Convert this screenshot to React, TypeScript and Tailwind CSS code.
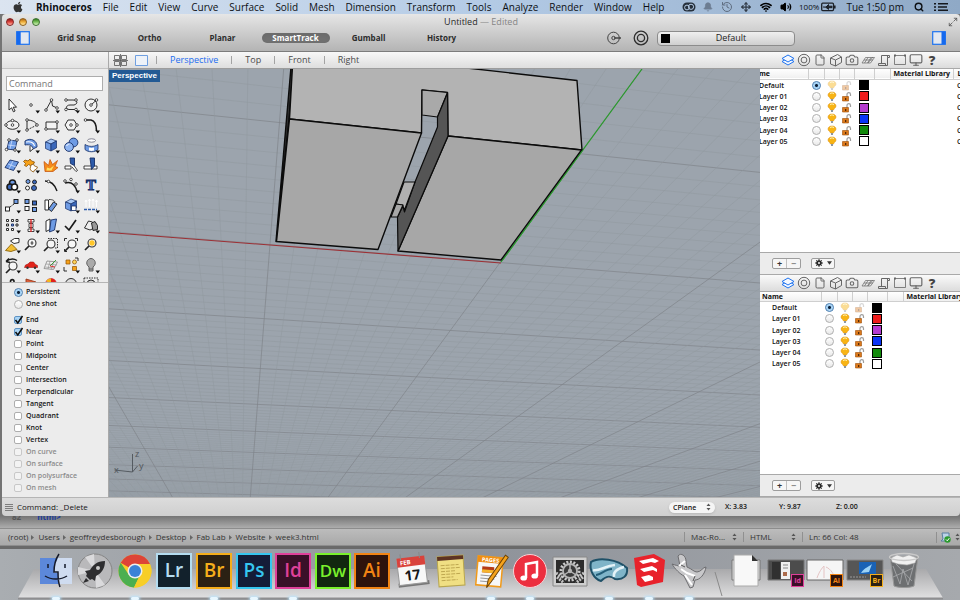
import type { ReactNode } from "react"
import { useState } from "react"
import { FaApple } from "react-icons/fa"
import { Bell, Camera, File, History, Maximize2, Monitor, Move, Search, Volume2, Wifi } from "lucide-react"

const menus = ["File", "Edit", "View", "Curve", "Surface", "Solid", "Mesh", "Dimension", "Transform", "Tools", "Analyze", "Render", "Window", "Help"]

function MenuBar() {
  return (
    <header className="flex h-3.5 shrink-0 items-center bg-gradient-to-r from-[#dbe4f0] via-[#b4cbe6] to-[#8fa9c6] px-3 text-[10px] leading-3 font-medium whitespace-nowrap text-[#0d1014]">
      <FaApple className="mr-3 h-3 w-3 shrink-0 text-[#333]" />
      <nav className="flex gap-[11px]">
        <button className="font-bold">Rhinoceros</button>
        {menus.map((m) => (
          <button key={m}>{m}</button>
        ))}
      </nav>
      <div className="ml-auto flex shrink-0 items-center">
        <div className="mr-1 flex">
          <span className="flex w-[19px] justify-center">
            <svg viewBox="0 0 14 12" className="h-3 w-3.5">
              <rect x="0.5" y="1.5" width="13" height="9" rx="4.5" fill="#26303c" />
              <circle cx="5" cy="6.5" r="2.4" fill="none" stroke="#b4cbe6" />
              <circle cx="9" cy="5.8" r="2.6" fill="none" stroke="#b4cbe6" />
            </svg>
          </span>
          <span className="flex w-[19px] justify-center"><Bell className="h-3 w-2.5 fill-[#6d7d92] text-[#6d7d92]" /></span>
          <span className="flex w-[19px] justify-center"><History className="h-3 w-3 text-[#5f6d80]" /></span>
          <span className="flex w-[19px] justify-center"><Move className="h-3 w-2.5 text-[#333c48]" strokeWidth={3} /></span>
          <span className="flex w-[21px] justify-center"><Wifi className="h-3 w-3.5 text-black" strokeWidth={3.4} /></span>
          <span className="flex w-[19px] justify-center"><Volume2 className="h-3 w-3 fill-black text-black" /></span>
        </div>
        <span className="mr-0.5 text-[8px]">100%</span>
        <svg viewBox="0 0 15 10" className="mr-2.5 h-2.5 w-[15px]">
          <rect x="0.7" y="1.2" width="11.8" height="7.4" rx="1" fill="none" stroke="#1c2128" strokeWidth="1.3" />
          <path d="M13 3.5h1.6v3H13z" fill="#1c2128" />
          <path d="M2 5h3l2.5-2.5v1.7H11v1.5H7.5v1.7L5 5.4" fill="#1c2128" stroke="#1c2128" />
        </svg>
        <span className="mr-2.5">Tue 1:50 pm</span>
        <Search className="mr-2.5 h-2.5 w-2.5" strokeWidth={3.4} />
        <svg viewBox="0 0 14 10" className="h-2.5 w-3.5" fill="#15181d">
          <path d="M0 1h2v1.6H0zM4 1h10v1.6H4zM0 4.2h2v1.6H0zM4 4.2h9v1.6H4zM0 7.4h2V9H0zM4 7.4h10V9H4z" />
        </svg>
      </div>
    </header>
  )
}

const lights = [
  "from-[#8d1d1d] via-[#e0443e] to-[#ffb3a8] border-[#842322]",
  "from-[#b36a12] via-[#f2b23c] to-[#ffe9a0] border-[#8e5f1e]",
  "from-[#2f7d1c] via-[#7cc35c] to-[#d8f5c0] border-[#3c7030]",
]

const snaps = ["Grid Snap", "Ortho", "Planar", "SmartTrack", "Gumball", "History"]

function PanelIcon({ right }: { right?: boolean }) {
  return (
    <svg viewBox="0 0 14 14" className="h-3.5 w-3.5">
      <rect x="0.7" y="0.7" width="12.6" height="12.6" fill="#e3e8f0" stroke="#1d73f0" strokeWidth="1.2" />
      <rect x={right ? 9.5 : 0.7} y="0.7" width="4" height="12.6" fill="#1569ee" />
    </svg>
  )
}

function TitleBar() {
  const [active, setActive] = useState("SmartTrack")
  return (
    <div className="shrink-0 rounded-t border-b border-[#7c7c7c] bg-gradient-to-b from-[#e6e6e6] to-[#b4b4b4]">
      <div className="flex h-4 items-center">
        <div className="flex w-24 gap-[5px] pl-1">
          {lights.map((c) => (
            <button key={c} aria-label="Window control" className={`h-2 w-2 rounded-full border bg-gradient-to-b ${c}`} />
          ))}
        </div>
        <h1 className="flex-1 text-center text-[9px] leading-3 font-medium text-[#2a2a2a]">
          Untitled <span className="text-[#858585]">— Edited</span>
        </h1>
        <div className="flex w-24 justify-end pr-0.5">
          <Maximize2 className="h-2.5 w-2.5 text-[#555]" />
        </div>
      </div>
      <div className="flex h-[21px] items-center px-3.5 pb-[5px]">
        <button aria-label="Toggle left panel" className="mr-2.5"><PanelIcon /></button>
        {snaps.map((s) => (
          <div key={s} className="flex w-[73px] justify-center">
            <button
              onClick={() => setActive(s)}
              className={`rounded-full text-[8px] leading-[10px] font-bold ${active === s ? "w-[68px] bg-[#707070] text-white shadow-inner" : "text-[#2c2c2c]"}`}
            >
              {s}
            </button>
          </div>
        ))}
        <div className="ml-auto flex items-center">
          <svg viewBox="0 0 14 14" className="mr-3 h-3.5 w-3.5" fill="none" stroke="#444">
            <circle cx="6.5" cy="7" r="5.8" />
            <circle cx="6.5" cy="7" r="1.7" />
            <path d="M7 7h7" strokeWidth="1.5" />
          </svg>
          <svg viewBox="0 0 16 16" className="mr-2 h-4 w-4" fill="none" stroke="#2e2e2e" strokeWidth="1.3">
            <circle cx="8" cy="8" r="6.8" />
            <circle cx="8" cy="8" r="3.6" />
          </svg>
          <div className="relative mr-[137px] flex items-center">
            <select aria-label="Layer" className="h-[15px] w-[138px] appearance-none rounded-sm border border-[#8c8c8c] bg-gradient-to-b from-[#f0f0f0] to-[#cfcfcf] pl-2.5 text-center text-[9px] leading-3 font-medium text-[#222]">
              <option>Default</option>
            </select>
            <span className="pointer-events-none absolute left-1 h-[9px] w-[9px] bg-black" />
          </div>
          <button aria-label="Toggle right panel"><PanelIcon right /></button>
        </div>
      </div>
    </div>
  )
}

const Flyout = () => <path d="M14.500 15.500h4.500l-2.250 3z" fill="#111" stroke="none" />
const Dot = ({ x, y }: { x: number; y: number }) => <circle cx={x} cy={y} r="1.3" fill="#fff" stroke="#222" strokeWidth="0.8" />
const Glass = ({ x = 11, y = 8 }: { x?: number; y?: number }) => (
  <g>
    <circle cx={x} cy={y} r="4" fill="#f6f6f6" stroke="#333" strokeWidth="1.1" />
    <path d={`M${x - 3} ${y + 3}l-4 4`} stroke="#222" strokeWidth="1.7" />
  </g>
)
const Cube = () => (
  <g stroke="#172f66" strokeWidth="0.7" strokeLinejoin="round">
    <path d="M4.500 7l5.500-3 5.500 2-5.500 3z" fill="#a9c8f5" />
    <path d="M4.500 7l5.500 2v7l-5.500-2.500z" fill="#6e9be4" />
    <path d="M10 9l5.500-3v7L10 16z" fill="#3b68bb" />
  </g>
)
const SmallBox = ({ x, y, fill }: { x: number; y: number; fill: string }) => <rect x={x} y={y} width="4" height="4" fill={fill} stroke="#111" />

const tools: [string, ReactNode][] = [
  ["Select", <path d="M7 4v11l2.600-2.200 1.800 4 1.700-.8-1.900-3.800h3.300z" fill="#fff" />],
  ["Point", <><Dot x={10} y={10} /><Flyout /></>],
  ["Polyline", <><path d="M5 15l5.500-10 1 6 5 2" /><Dot x={5} y={15} /><Dot x={10.5} y={5} /><Dot x={16} y={13} /><Flyout /></>],
  ["Curve", <><path d="M5 5h7c5 0 5 4 1 5H9c-4 0-5 4-1 4.500h7" /><Dot x={5} y={5} /><Dot x={15} y={5} /><Dot x={5} y={14.5} /><Dot x={15} y={14.5} /><Flyout /></>],
  ["Circle", <><circle cx="10" cy="10" r="6" fill="#f3f3f3" /><path d="M10 10l5-4.500" /><Dot x={10} y={10} /><Dot x={15.5} y={5} /><Flyout /></>],
  ["Ellipse", <><ellipse cx="10.500" cy="10" rx="6.500" ry="4.300" fill="#f3f3f3" /><Dot x={10.5} y={10} /><Dot x={4} y={10} /><Dot x={10.5} y={5.5} /><Flyout /></>],
  ["Arc", <><path d="M6 15L16 10" strokeDasharray="2 1" /><path d="M6 5v10M6 5c5 0 9 2 10 5" /><Dot x={6} y={5} /><Dot x={6} y={15} /><Dot x={16} y={10} /><Flyout /></>],
  ["Rectangle", <><path d="M5 7h11v7H5z" fill="#f3f3f3" /><Dot x={5} y={14} /><Dot x={16} y={7} /><Flyout /></>],
  ["Polygon", <><path d="M4 10l3-5h6l3 5-3 5H7z" fill="#f3f3f3" /><Dot x={10} y={10} /><Dot x={16} y={10} /><Flyout /></>],
  ["Fillet", <><path d="M4 5h6c4 1 5.500 5 5.500 11" strokeWidth="1.600" /><Dot x={4.5} y={5} /><Flyout /></>],
  ["Surface", <><path d="M7 5l8 1-2 9-8-1z" fill="#6e9be4" stroke="#172f66" /><path d="M10 5l-2 9M6 10l8 1" stroke="#dbe8ff" strokeWidth="0.700" /><Dot x={7} y={5} /><Dot x={15} y={5} /><Dot x={4.5} y={14.5} /><Dot x={13} y={15} /><Flyout /></>],
  ["Sweep", <><path d="M4 6c3-2 6-2 8-1 4 2 4 5 4 7l-4 2c0-3-3-5-8-4z" fill="#6e9be4" stroke="#172f66" /><path d="M5 7c5-1 8 1 8.500 4" stroke="#fff" strokeWidth="1.200" /><path d="M9 11v5.500l3-2.500" fill="#fff" /><Flyout /></>],
  ["Box", <><Cube /><Flyout /></>],
  ["Boolean", <><circle cx="12.500" cy="7.500" r="4.400" fill="#6e9be4" stroke="#172f66" /><circle cx="8" cy="12" r="4.400" fill="#8fb5f2" stroke="#172f66" /><path d="M5.500 11c1-2 3-2 3-2" stroke="#fff" /><Flyout /></>],
  ["Revolve", <><ellipse cx="10.500" cy="5.500" rx="4" ry="1.700" fill="#fff" stroke="#667" strokeWidth="0.800" /><path d="M4 9.500v5c3 3 10 3 13 0v-5c-4 2.500-9 2.500-13 0z" fill="#6e9be4" stroke="#172f66" strokeWidth="0.800" /><path d="M8 12.500c2 .5 3 .5 5 0v3c-2 .5-3 .5-5 0z" fill="#fff" stroke="none" /><Flyout /></>],
  ["Patch", <><path d="M8 5l8.500 2-5 8.500-8.500-3z" fill="#6e9be4" stroke="#172f66" /><path d="M11 6l-4 8M6 9l8 3" stroke="#dbe8ff" strokeWidth="0.700" /><Flyout /></>],
  ["Plug-ins", <><path d="M4 5l3 1 2-2 1.500 2 3 1-1 2-3 1.500-2-1-2 2-2-1 1-2-2-2z" fill="#f6a11a" stroke="#8c5204" strokeWidth="0.800" /><path d="M10 10l2.500-1 1 2 3 1-1 2-2 1-1 2-2-1-1.500-2z" fill="#fff" stroke="#8c5204" strokeWidth="0.800" /><Flyout /></>],
  ["Explode", <><path d="M4 16.500l-1-10 4.500 4 1.500-6 2.500 5 5-4-2.500 6 3 1-5 4z" fill="#f58a1b" stroke="#c34d05" strokeWidth="0.700" /><path d="M5.500 15.500l.5-3 3 1 4-3-2.500 5z" fill="#ffe060" stroke="none" /></>],
  ["Trim", <><path d="M4 11h6v3H4zM11 12l4 4.500 1.500-1-3.500-5" fill="#fff" strokeWidth="0.800" /><path d="M9 3h4.500v7.500l-4-2z" fill="#2d5baa" stroke="#172f66" /></>],
  ["Split", <><path d="M3 11h13v3H3z" fill="#fff" strokeWidth="0.800" /><path d="M9 3h4.500v8l-3 3.500z" fill="#2d5baa" stroke="#172f66" /></>],
  ["Group", <><circle cx="10.500" cy="8" r="3" fill="#6e9be4" strokeWidth="1.600" /><circle cx="8" cy="12" r="3" fill="#3b68bb" strokeWidth="1.600" /><circle cx="12.500" cy="12" r="3" fill="#fff" strokeWidth="1.600" /><Flyout /></>],
  ["Ungroup", <><circle cx="7" cy="6.500" r="2" fill="#6e9be4" /><circle cx="13.500" cy="7" r="2" fill="#3b68bb" /><circle cx="6.500" cy="13" r="2" fill="#fff" /><circle cx="13" cy="13" r="2.500" fill="#3b68bb" /></>],
  ["Edit curve", <><path d="M4 6c6 0 10 4 12 10" strokeWidth="1.400" /><Dot x={7.5} y={6.5} /></>],
  ["Edit points", <><path d="M4 8c6-2 10 2 12 8" strokeWidth="1.400" /><Dot x={4} y={6} /><Dot x={10} y={4.5} /><Dot x={15} y={9} /><Flyout /></>],
  ["Text", <><text x="10" y="15" textAnchor="middle" fontSize="15" fontWeight="900" fontFamily="Liberation Serif, serif" fill="#4a7dd6" stroke="#172f66" strokeWidth="1">T</text><Flyout /></>],
  ["Move", <><SmallBox x={3.5} y={12} fill="#fff" /><SmallBox x={12} y={4.5} fill="#6e9be4" /><path d="M8 12l4-3" strokeDasharray="2 1" /><Flyout /></>],
  ["Copy", <><SmallBox x={4} y={4.5} fill="#6e9be4" /><SmallBox x={11.5} y={6} fill="#3b68bb" /><SmallBox x={4} y={11.5} fill="#fff" /><SmallBox x={11.5} y={12.5} fill="#6e9be4" /></>],
  ["Rotate", <><path d="M4 5h3.500v10H4z" fill="#fff" /><path d="M12.500 7l3.500 2-5.500 7.500-3-2.500z" fill="#6e9be4" /><path d="M8 4.500c4 0 5 1 6 2.500" strokeWidth="0.800" /></>],
  ["Solid edit", <><Cube /><path d="M10.500 11h4.500v4.500h-4.500z" fill="#fff" stroke="#172f66" strokeWidth="0.800" /><Flyout /></>],
  ["Project", <><path d="M3 14.500h13" stroke="#2d5baa" strokeWidth="1.600" strokeDasharray="3 1" /><path d="M5 5v7M8.500 4v8M12 4v8M15.500 5v7M4 7l1-2 1 2M7.500 6l1-2 1 2M11 6l1-2 1 2M14.500 7l1-2 1 2" stroke="#fff" /><Flyout /></>],
  ["Array", <><path d="M4.500 4.500h2v2h-2zM9.500 4.500h2v2h-2zM14 4.500h2v2h-2zM4.500 9h2v2h-2zM14 9h2v2h-2zM4.500 13.500h2v2h-2zM9.500 13.500h2v2h-2z" fill="#fff" /><path d="M9.500 9h2v2h-2z" fill="#6e9be4" stroke="#172f66" /><Flyout /></>],
  ["Align", <><path d="M7 4.500h6v2.500H7zM8 8.500h4v4H8zM7 14h6v2.500H7z" fill="#fff" strokeWidth="0.800" /><path d="M10 4v13" stroke="#d22" strokeWidth="1.300" /><Flyout /></>],
  ["Flow", <><path d="M5 6l4-2v10.500l-4 2z" fill="#fff" /><path d="M10 5l5.500-1-2 11-5 2z" fill="#6e9be4" stroke="#172f66" /><Flyout /></>],
  ["Check", <><path d="M4 11l4 4 7-10" strokeWidth="1.700" /><Flyout /></>],
  ["Primitives", <><path d="M3.500 13l4-7 4 1 2 6-4.500 2z" fill="#eee" /><path d="M10.500 8l3.500-1.500 2.500 4v4l-4.500 1z" fill="#999" /><Flyout /></>],
  ["Plane", <><path d="M3.500 15.500l6-6.500 5.500 5.500-6 2z" fill="#f0bd33" stroke="#8c6204" /><path d="M8.500 6l4-2.500h4.500v4l-5 1z" fill="#fff" strokeWidth="0.900" /><Flyout /></>],
  ["Zoom", <><Glass /><path d="M11 6v4M9.500 8h3" strokeWidth="0.800" /></>],
  ["Zoom window", <><path d="M7 3.500h9.500v9.500h-3" strokeDasharray="1.500 1" /><Glass x={10} y={9} /><Flyout /></>],
  ["Zoom extents", <><Glass x={11} y={9} /><path d="M3.500 6V3.500H6M14 3.500h2.500V6M16.500 14v2.500H14M3.500 14v2.500H6" /></>],
  ["Zoom selected", <><Glass x={11} y={8} /><circle cx="11" cy="8" r="2.700" fill="#ffc629" stroke="none" /></>],
  ["Undo view", <><Glass x={11} y={11} /><path d="M4 6.500c4-3 8-3 11-1M4 6.500l3-3M4 6.500l4 1" strokeWidth="1.500" /><Flyout /></>],
  ["Car", <><path d="M3.500 12.500l1-2.500 2.500-1 2-2h3.500l2 2.500 2 1v2z" fill="#e2231a" stroke="#a41510" strokeWidth="0.600" /><circle cx="6.500" cy="12.700" r="1.200" fill="#333" stroke="none" /><circle cx="14" cy="12.700" r="1.200" fill="#333" stroke="none" /><Flyout /></>],
  ["CPlane", <><path d="M6 6l10.500 1-4 7.500-9.500-1z" fill="#eee" stroke="#888" strokeWidth="0.800" /><path d="M9 6l-2 8M13 6.500l-3 8M5 9l11 1M4 12l10 1" stroke="#888" strokeWidth="0.600" /><path d="M9 11l6-6" stroke="#2a9c2a" /><path d="M9 11l5 1" stroke="#d22" /><Flyout /></>],
  ["Layers", <><path d="M5 5h4v4H5z" fill="#f6a11a" stroke="#8c5204" strokeWidth="0.700" /><path d="M11.500 11.500h4v4h-4z" fill="#f6a11a" stroke="#8c5204" strokeWidth="0.700" /><circle cx="13.500" cy="7" r="2" fill="#ffd65c" stroke="#8c5204" strokeWidth="0.700" /><path d="M3 12v4h3M14 3h3v3" /><Flyout /></>],
  ["Lights", <><path d="M8 12c-4.500-3.500-1.500-8.500 2-8.500s6.500 5 2 8.500v4H8z" fill="#aaa" stroke="#555" /><path d="M8 14h4" stroke="#555" /><Flyout /></>],
  ["Lock", <path d="M8.500 8V6.500c0-2.500 3.500-2.500 3.500 0V8M7.500 8h5.500v5H7.500z" strokeWidth="1.600" />],
  ["Render", <path d="M5 4l10 3v7H5z" fill="#d95f3b" stroke="#9a3818" />],
  ["Colors", <><circle cx="10" cy="9" r="5.500" fill="#e83ca0" stroke="#b33" strokeWidth="0.600" /><path d="M10 9L5 6a5.500 5.500 0 0 1 5-2.500z" fill="#f5b81c" stroke="none" /><path d="M10 9V3.500a5.500 5.500 0 0 1 5 3z" fill="#e2231a" stroke="none" /></>],
  ["Sphere", <circle cx="10" cy="9" r="5.500" fill="#ddd" />],
  ["Mesh", <><path d="M3 3h14v8H3z" strokeDasharray="1.500 1" /><circle cx="10" cy="9" r="4" fill="#ccc" /></>],
]

const snapModes: [string, boolean, boolean][] = [
  ["End", true, false], ["Near", true, false], ["Point", false, false], ["Midpoint", false, false],
  ["Center", false, false], ["Intersection", false, false], ["Perpendicular", false, false],
  ["Tangent", false, false], ["Quadrant", false, false], ["Knot", false, false], ["Vertex", false, false],
  ["On curve", false, true], ["On surface", false, true], ["On polysurface", false, true], ["On mesh", false, true],
]

const radioClass =
  "h-[9px] w-[9px] shrink-0 appearance-none rounded-full border border-[#b0b0b0] bg-gradient-to-b from-white to-[#e8e8e8] checked:border-[#4d7fb0] checked:bg-[radial-gradient(circle,#0d2038_0_1px,#9ccdf3_2px,#c9e6fb_4px)]"

function Sidebar() {
  return (
    <aside className="flex w-[107px] shrink-0 flex-col border-r border-[#a9a9a9] bg-[#ececec]">
      <div className="h-[17px] shrink-0 border-b border-[#c4c4c4] bg-gradient-to-b from-[#f4f4f4] to-[#e2e2e2]" />
      <input
        aria-label="Command"
        placeholder="Command"
        className="mx-1 mt-[7px] mb-1 h-[15px] w-[97px] shrink-0 border border-[#adadad] bg-white pl-0.5 text-[9px] leading-3 placeholder:text-[#777]"
      />
      <div className="grid h-[188px] shrink-0 grid-cols-[19px_repeat(4,20px)] content-start overflow-hidden border-b border-[#b5b5b5]">
        {tools.map(([name, art]) => (
          <button key={name} aria-label={name} className="flex h-5 justify-center">
            <svg viewBox="0 0 20 20" className="h-5 w-5 shrink-0" fill="none" stroke="#1a1a1a" strokeWidth="0.9">
              {art}
            </svg>
          </button>
        ))}
      </div>
      <div className="min-h-0 flex-1 overflow-hidden pt-[3px] pl-3 text-[7px] leading-3 font-semibold text-[#161616]">
        {["Persistent", "One shot"].map((r, i) => (
          <label key={r} className="flex h-3 items-center gap-[3px]">
            <input type="radio" name="snap" defaultChecked={i === 0} className={radioClass} />
            {r}
          </label>
        ))}
        <div className="h-1" />
        {snapModes.map(([label, on, disabled]) => (
          <label key={label} className={`flex h-3 items-center gap-[3px] ${disabled ? "text-[#8b8b8b]" : ""}`}>
            <span className="relative flex h-2 w-[9px]">
              <input
                type="checkbox"
                defaultChecked={on}
                disabled={disabled}
                className="peer h-2 w-2 appearance-none rounded-[2px] border border-[#adadad] bg-white checked:border-[#5f93c4] checked:bg-[#a9d4f5] disabled:border-[#c8c8c8] disabled:bg-[#f3f3f3]"
              />
              <svg viewBox="0 0 10 10" className="pointer-events-none absolute -top-px left-0 hidden h-2.5 w-2.5 peer-checked:block">
                <path d="M1.500 5l2.300 3L8.500 1" fill="none" stroke="#0b0b0b" strokeWidth="1.500" />
              </svg>
            </span>
            {label}
          </label>
        ))}
      </div>
    </aside>
  )
}

// Vanishing points of the construction plane grid
const vpY = { x: 241, y: 616 }
const vpX = { x: 5149, y: 628 }

function GridLines() {
  const across = Array.from({ length: 330 }, (_, i) => i - 12).map((i) => ({ i, y: 623 - 1596 / (i / 10 + 3.08) }))
  const along = Array.from({ length: 100 }, (_, i) => i - 65).map((i) => ({ i, s: -0.733 + i * 0.0655 }))
  const tone = (i: number) => (i % 10 === 0 ? "#7f848a" : "#91989f")
  return (
    <g>
      {across
        .filter(({ y }) => y < 510)
        .map(({ i, y }) => (
          <line key={`a${i}`} x1="109" y1={y} x2={vpX.x} y2={vpX.y} stroke={tone(i)} strokeWidth={i % 10 === 0 ? 0.7 : 0.5} />
        ))}
      {along.map(({ i, s }) => (
        <line key={`b${i}`} x1={vpY.x - s * vpY.y} y1="0" x2={vpY.x} y2={vpY.y} stroke={tone(i)} strokeWidth={i % 10 === 0 ? 0.7 : 0.5} />
      ))}
    </g>
  )
}

function Viewport() {
  return (
    <div className="relative min-h-0 flex-1 bg-[#9ca4ad]">
      <svg viewBox="109 69 651 428" preserveAspectRatio="xMidYMid slice" className="absolute inset-0 h-full w-full">
        <GridLines />
        <path d="M109 232.500L501 263" stroke="#9d3035" strokeWidth="1.100" />
        <path d="M501 262L642 69" stroke="#2a9a2c" strokeWidth="1.200" />
        <g stroke="#0b0b0b" strokeWidth="1.400" strokeLinejoin="round">
          <path d="M291 67L276 241.500 289 119 293 67z" fill="#333" />
          <path d="M292.500 66L289.500 119 421.500 133 422 90 447.500 92.500 448 136 582 150 577 80.500 440 65z" fill="#b3b3b3" />
          <path d="M289.500 119L421.500 133 378 249.500 276.500 241.500z" fill="#a7a7a7" />
          <path d="M448 136L581.500 150 501 260 398 251z" fill="#a7a7a7" />
          <path d="M422 90L447.500 92.500 437.500 117 422 115z" fill="#a9a9a9" strokeWidth="1.200" />
          <path d="M447.500 93L448 136 398 251 397.500 217 403 206 404.500 212 415 182 437.500 127 437.500 117z" fill="#555" strokeWidth="1.200" />
          <path d="M404 182L415 182 404.500 210 402.500 205 396 204z" fill="#b0b0b0" strokeWidth="1.200" />
          <path d="M396 204L403 205 397.500 217 391 217z" fill="#a7a7a7" strokeWidth="1.200" />
        </g>
        <path d="M502.500 260.500L583 150" stroke="#2a9a2c" strokeWidth="0.800" />
        <path d="M132.500 454v18l-18-2M132.500 472l5-6" stroke="#555b61" fill="none" />
        <g fill="#4f555b" fontSize="9" fontFamily="Open Sans, sans-serif">
          <text x="135" y="457">z</text>
          <text x="139" y="469">y</text>
          <text x="114" y="473">x</text>
        </g>
      </svg>
      <span className="absolute top-px left-0 bg-[#235a94] px-[3px] font-['Liberation_Sans',sans-serif] text-[8px] leading-3 font-bold text-white">Perspective</span>
    </div>
  )
}

function ViewTabs() {
  return (
    <div className="flex h-[17px] shrink-0 items-center border-b border-[#9d9d9d] bg-gradient-to-b from-[#f8f8f8] to-[#dedede] pl-1 text-[9px] leading-3 font-medium text-[#4a4a4a]">
      <button aria-label="Four views" className="mr-1.5">
        <svg viewBox="0 0 15 13" className="h-[13px] w-[15px]" fill="none" stroke="#555">
          <path d="M1.500 1.500h5v4h-5zM8.500 1.500h5v4h-5zM1.500 7.500h5v4h-5zM8.500 7.500h5v4h-5zM0 6.500h15M7.500 0v13" strokeWidth="0.800" />
        </svg>
      </button>
      <button aria-label="Single view" className="mr-[7px]">
        <svg viewBox="0 0 15 13" className="h-[13px] w-[15px]" fill="#edf2f9" stroke="#6f9fe0">
          <path d="M1.500 1.500h12v10h-12z" />
        </svg>
      </button>
      {["Perspective", "Top", "Front", "Right"].map((v, i) => (
        <div key={v} className="flex items-center">
          <span className="h-2 w-px bg-[#a3a3a3]" />
          <button className={i === 0 ? "px-[13px] text-[#1b6cf0]" : "px-[13px]"}>{v}</button>
        </div>
      ))}
    </div>
  )
}

function PanelTabs() {
  const cell = "flex h-4 w-4 items-center justify-center"
  return (
    <div className="flex h-[17px] shrink-0 items-center border-b border-[#a9a9a9] bg-gradient-to-b from-[#fafafa] to-[#dcdcdc] pl-5 text-[#666]">
      <button aria-label="Layers" className={cell}>
        <svg viewBox="0 0 14 14" className="h-3.5 w-3.5" fill="#f4f8ff" stroke="#1d73f0">
          <path d="M1 8.500l6-3.500 6 3.500-6 3.500z" />
          <path d="M1 5.500L7 2l6 3.500L7 9z" />
        </svg>
      </button>
      <button aria-label="Properties" className={cell}>
        <svg viewBox="0 0 14 14" className="h-3.5 w-3.5" fill="none" stroke="currentColor">
          <circle cx="7" cy="7" r="5.700" />
          <circle cx="7" cy="7" r="2.900" />
        </svg>
      </button>
      <button aria-label="Notes" className={cell}><File className="h-3 w-3" strokeWidth={2} /></button>
      <button aria-label="Blocks" className={cell}>
        <svg viewBox="0 0 14 14" className="h-3.5 w-3.5" fill="none" stroke="currentColor">
          <path d="M1.500 5l7-3.500 4 2.500v5.500l-6 3.500-5-2zM1.500 5l5 2 6-3M6.500 7v6" />
        </svg>
      </button>
      <button aria-label="Views" className={cell}><Camera className="h-3.5 w-3.5" strokeWidth={1.8} /></button>
      <button aria-label="Planes" className={cell}>
        <svg viewBox="0 0 14 14" className="h-3.5 w-3.5" fill="none" stroke="currentColor" strokeWidth="0.7">
          <path d="M4.500 4.500h9l-4 5.500H1zM7 4.500L3.500 10M10 4.500L6.500 10M3 7h9M7 10l5-6" />
        </svg>
      </button>
      <button aria-label="Commands" className={cell}>
        <svg viewBox="0 0 14 14" className="h-3.5 w-3.5" fill="none" stroke="currentColor">
          <path d="M4.500 10.500v-8h8v2h-2v8h-9v-2h7v2M10.500 4.500v-2" />
        </svg>
      </button>
      <button aria-label="Frame" className={cell}>
        <svg viewBox="0 0 14 14" className="h-3.5 w-3.5" fill="none" stroke="currentColor">
          <path d="M1.500 2.500h11v9h-11z" strokeWidth="0.800" />
          <path d="M1 2.500h2M11 2.500h2" strokeWidth="2" />
        </svg>
      </button>
      <button aria-label="Display" className={cell}><Monitor className="h-3.5 w-3.5" strokeWidth={2} /></button>
      <button aria-label="Help" className={`${cell} text-[13px] leading-4 font-extrabold text-[#444]`}>?</button>
    </div>
  )
}

const layers = [
  ["Default", "bg-black"],
  ["Layer 01", "bg-[#ee1c1c]"],
  ["Layer 02", "bg-[#b43bd0]"],
  ["Layer 03", "bg-[#0a34f5]"],
  ["Layer 04", "bg-[#128a0b]"],
  ["Layer 05", "bg-white"],
]

function LayerPanel({ id, scrolled }: { id: string; scrolled?: boolean }) {
  const head = "border-r border-[#cfcfcf] p-0"
  return (
    <section className="flex min-h-0 flex-1 flex-col">
      <PanelTabs />
      <div className="min-h-0 flex-1 overflow-hidden bg-white">
        <table className={`h-[78px] w-[260px] table-fixed border-collapse text-left text-[7px] leading-[9px] font-semibold text-[#111] ${scrolled ? "-ml-[13px]" : ""}`}>
          <colgroup>
            <col className="w-[61px]" />
            <col className="w-[16px]" />
            <col className="w-[15px]" />
            <col className="w-[15px]" />
            <col className="w-[20px]" />
            <col className="w-[16px]" />
            <col className="w-[63px]" />
            <col />
          </colgroup>
          <thead>
            <tr className="h-[10px] border-b border-[#cfcfcf] bg-gradient-to-b from-white to-[#f0f0f0]">
              <th className={`${head} pl-0.5`}>Name</th>
              <th className={head} /><th className={head} /><th className={head} /><th className={head} /><th className={head} />
              <th className={`${head} pl-[3px] whitespace-nowrap`}>Material Library</th>
              <th className="p-0 pl-1">Linetype</th>
            </tr>
          </thead>
          <tbody>
            {layers.map(([name, color], i) => (
              <tr key={name}>
                <td className="p-0 pl-3">{name}</td>
                <td className="p-0">
                  <input type="radio" name={id} aria-label={`Current layer ${name}`} defaultChecked={i === 0} className={`mx-auto block ${radioClass}`} />
                </td>
                <td className="p-0">
                  <svg viewBox="0 0 10 11" className={`mx-auto h-[11px] w-2.5 ${i === 0 ? "opacity-45" : ""}`}>
                    <path d="M1 4c0-4 8-4 8 0 0 2-2 2-2.500 4h-3C3 6 1 6 1 4z" fill="#f8b414" stroke="#d98a10" strokeWidth="0.500" />
                    <path d="M3 3c1-1.500 3-1.500 4 0" fill="none" stroke="#fff3b0" />
                    <path d="M4 8h2v2H4z" fill="#8d96a0" />
                  </svg>
                </td>
                <td className="p-0">
                  <svg viewBox="0 0 11 11" className={`mx-auto h-[11px] w-[11px] ${i === 0 ? "opacity-40" : ""}`}>
                    <path d="M6 6V3.500c0-2.500 3.500-2.500 3.500 0V5" fill="none" stroke="#9d9d9d" strokeWidth="1.200" />
                    <path d="M1.500 5.500h6V10h-6z" fill="#dc7a1c" stroke="#9c4e08" strokeWidth="0.600" />
                    <path d="M4 7h1.300v2H4z" fill="#53290a" />
                  </svg>
                </td>
                <td className="p-0">
                  <button aria-label={`${name} color`} className={`mx-auto block h-2.5 w-2.5 border border-black ${color}`} />
                </td>
                <td className="p-0" />
                <td className="p-0" />
                <td className="p-0 pl-1">Continuous</td>
              </tr>
            ))}
          </tbody>
        </table>
      </div>
      <div className="flex h-[23px] shrink-0 items-center gap-2.5 border-y border-[#a9a9a9] bg-[#ececec] pl-3">
        <div className="flex h-[11px] w-[29px] rounded-xs border border-[#9d9d9d] bg-[#f6f6f6] text-[9px] leading-[9px] font-bold text-[#333]">
          <button aria-label="Add layer" className="flex-1 border-r border-[#c0c0c0]">+</button>
          <button aria-label="Remove layer" className="flex-1 text-[#888]">−</button>
        </div>
        <button aria-label="Layer actions" className="flex h-[11px] w-6 items-center justify-center gap-1 rounded-xs border border-[#9d9d9d] bg-[#f6f6f6]">
          <svg viewBox="0 0 8 8" className="h-2 w-2" fill="none" stroke="#222">
            <circle cx="4" cy="4" r="2" strokeWidth="1.600" />
            <path d="M4 0v8M0 4h8M1.200 1.200l5.600 5.600M6.800 1.200L1.200 6.800" strokeWidth="0.900" />
            <circle cx="4" cy="4" r="1" fill="#f6f6f6" stroke="none" />
          </svg>
          <svg viewBox="0 0 6 4" className="h-1 w-[5px]"><path d="M0 0h6L3 4z" fill="#333" /></svg>
        </button>
      </div>
    </section>
  )
}

const UpDown = () => (
  <svg viewBox="0 0 5 8" className="h-2 w-[5px]" fill="#555">
    <path d="M2.500 0.500L4.500 3h-4zM2.500 7.500L4.500 5h-4z" />
  </svg>
)

function StatusBar() {
  return (
    <footer className="flex h-[19px] shrink-0 items-center rounded-b border-t border-[#b5b5b5] bg-gradient-to-b from-[#dcdcdc] to-[#cfcfcf] pl-[3px] text-[7px] leading-3 font-semibold text-[#161616]">
      <svg viewBox="0 0 8 8" className="mr-1 h-2 w-2" stroke="#666">
        <path d="M0 1.500h8M0 3.500h8M0 5.500h8M0 7.500h8" strokeWidth="0.800" />
      </svg>
      <span className="text-[8px] font-medium">Command: _Delete</span>
      <div className="relative ml-auto flex items-center">
        <select aria-label="Coordinate system" className="h-[11px] w-[46px] appearance-none rounded-full bg-[#f5f5f5] pl-1 text-[7px] leading-[11px] font-semibold shadow-sm">
          <option>CPlane</option>
        </select>
        <span className="pointer-events-none absolute right-1"><UpDown /></span>
      </div>
      <div className="ml-2.5 flex w-[235px]">
        <span className="w-[54px]">X: 3.83</span>
        <span className="w-[57px]">Y: 9.87</span>
        <span>Z: 0.00</span>
      </div>
    </footer>
  )
}

const crumbs = ["(root)", "Users", "geoffreydesborough", "Desktop", "Fab Lab", "Website", "week3.html"]

function EditorWindow() {
  return (
    <div className="flex h-[33px] shrink-0 flex-col border-b-[3px] border-[#6a6a6a]">
      <div className="flex h-3 shrink-0 gap-4 overflow-hidden bg-gradient-to-b from-[#747474] to-[#adadad] pl-3 text-[8px] leading-[1px] font-bold">
        <span className="text-[#555]">82</span>
        <span className="text-[#1a3c9c]">html&gt;</span>
      </div>
      <div className="flex flex-1 items-center border-y border-[#8d8d8d] bg-gradient-to-b from-[#bcbcbc] to-[#a9a9a9] pl-2 text-[8px] leading-3 font-medium text-[#333]">
        <nav className="flex items-center gap-[3px]">
          {crumbs.map((c, i) => (
            <span key={c} className="flex items-center gap-1">
              {i > 0 && <svg viewBox="0 0 3 5" className="h-[5px] w-[3px]"><path d="M0 0l3 2.500L0 5z" fill="#666" /></svg>}
              <a href="#">{c}</a>
            </span>
          ))}
        </nav>
        <div className="ml-auto flex items-center">
          <button className="flex w-[59px] items-center justify-between border-l border-[#909090] px-1.5 leading-[10px]">Mac-Ro... <UpDown /></button>
          <button className="flex w-[59px] items-center justify-between border-l border-[#909090] px-1.5 leading-[10px]">HTML <UpDown /></button>
          <span className="w-[134px] border-l border-[#909090] pl-1.5 leading-[10px]">Ln: 66 Col: 48</span>
          <button aria-label="Validate" className="flex w-6 items-center gap-1 border-l border-[#909090] pl-[3px]">
            <svg viewBox="0 0 11 11" className="h-[11px] w-[11px]">
              <path d="M2 1h7v8H1l2-2z" fill="#bcd3e8" stroke="#5a7f9f" />
              <circle cx="7.500" cy="7.500" r="3.200" fill="#2b9b2f" />
              <path d="M6 7.500l1.300 1.300 2-2.600" fill="none" stroke="#fff" />
            </svg>
            <UpDown />
          </button>
        </div>
      </div>
    </div>
  )
}

function AdobeIcon({ label, color, bg, small }: { label: string; color: string; bg: string; small?: boolean }) {
  const size = label === "Dw" ? 17 : 19
  return (
    <g>
      <rect x={small ? 23.5 : 1} y={small ? 21.5 : 1} width={small ? 12 : 34} height={small ? 12 : 34} fill={bg} stroke={color} strokeWidth={small ? 1 : 2} />
      <text x={small ? 29.5 : 18} y={small ? 30 : 24} textAnchor="middle" fontSize={small ? 7 : size} fontWeight={small ? 700 : 600} fontFamily="Open Sans, sans-serif" fill={color}>
        {label}
      </text>
    </g>
  )
}

const dockApps: [string, ReactNode, boolean][] = [
  ["Finder", <><path d="M2 5h32v26H2z" fill="#8fb0e8" /><path d="M2 5h17c-3 7-3 10-3 15h4c0 4 0 7 1 11H2z" fill="#5c88da" /><path d="M20 5h14v26H21c-1-4-1-7-1-11h-4c0-5 0-8 4-15z" fill="#cfdcf0" /><path d="M21 1c-4 6-5 12-5 18h4c0 6 0 10 2 15M7 23c6 4 16 4 22 0M10 11v4M27 11v4" fill="none" stroke="#151a2a" strokeWidth="1.500" /></>, true],
  ["Launchpad", <><circle cx="18" cy="18" r="17" fill="#b9b9bb" stroke="#858585" /><path d="M18 18L8 4l9-3zM18 18l10 14-9 3zM18 18L1 22v-8z" fill="#dadadc" /><path d="M28 8c-8 0-12 4-15 9l-5 1 2 3-1 2 4 4 2-1 3 2 1-5c6-3 9-8 9-15zM9 25l-3 5 6-2z" fill="#2e2e30" /><circle cx="21" cy="15" r="2" fill="#ccc" /></>, false],
  ["Chrome", <><circle cx="18" cy="18" r="16.500" fill="#f7ce28" /><path d="M18 18L3.700 9.700A16.500 16.500 0 0 1 33 11H18z" fill="#dd4437" /><path d="M18 18h7l-8 16.500A16.500 16.500 0 0 1 3.700 9.700L12 22z" fill="#4caf50" /><path d="M18 18L25 18 17 34.500A16.500 16.500 0 0 0 33 11H18z" fill="#f7ce28" /><circle cx="18" cy="18" r="7.500" fill="#eee" /><circle cx="18" cy="18" r="6" fill="#3b82d6" /></>, true],
  ["Lightroom", <AdobeIcon label="Lr" color="#b4dcf0" bg="#12212c" />, false],
  ["Bridge", <AdobeIcon label="Br" color="#f5ae1b" bg="#2b2114" />, true],
  ["Photoshop", <AdobeIcon label="Ps" color="#36c6f0" bg="#141d38" />, true],
  ["InDesign", <AdobeIcon label="Id" color="#e0409a" bg="#3a1028" />, true],
  ["Dreamweaver", <AdobeIcon label="Dw" color="#7af22c" bg="#12280f" />, false],
  ["Illustrator", <AdobeIcon label="Ai" color="#f28414" bg="#2e130c" />, false],
  ["Calendar", <g transform="rotate(-7 18 18)"><path d="M3 29h31v4H3z" fill="#777" /><path d="M4 5h28v26H4z" fill="#f8f8f8" stroke="#999" /><path d="M4 4h28v9H4z" fill="#d9433c" /><text x="7" y="11" fontSize="6" fontWeight="700" fill="#fff">FEB</text><path d="M8 6V0M27 6V0" stroke="#888" /><text x="18" y="27" textAnchor="middle" fontSize="14" fontWeight="700" fontFamily="Open Sans, sans-serif" fill="#161616">17</text></g>, false],
  ["Stickies", <g transform="rotate(-4 18 18)"><path d="M5 3h26v30H5z" fill="#f0df83" stroke="#b8a64e" /><path d="M5 3h26v4H5z" fill="#5e3423" /><path d="M8 12h18M8 15h20M8 18h15M8 21h19M8 24h12M8 27h16" stroke="#b49b45" strokeDasharray="4 1" strokeWidth="0.800" /></g>, false],
  ["Pages", <g transform="rotate(5 18 18)"><path d="M4 4h25v29H4z" fill="#f7f7f7" stroke="#f19a1a" strokeWidth="1.500" /><path d="M4 4h25v6H4z" fill="#f08e12" /><text x="16.500" y="9" textAnchor="middle" fontSize="5.500" fontWeight="700" fill="#fff">PAGES</text><path d="M9 14h12v6H9z" fill="#b53a17" /><path d="M9 17h12v3H9z" fill="#f5b52e" /><path d="M8 23h16M8 26h14M8 29h8" stroke="#999" /><path d="M31 1l3 2-15 26-4 6 1-8z" fill="#f5a31c" stroke="#6b4206" /></g>, true],
  ["iTunes", <><circle cx="18" cy="18" r="16.500" fill="#ec2f3f" stroke="#f8d0d4" /><path d="M14 25V11l11-2v14" fill="none" stroke="#fff" strokeWidth="2.500" /><ellipse cx="11.700" cy="25" rx="3.300" ry="2.600" fill="#fff" /><ellipse cx="22.700" cy="23" rx="3.300" ry="2.600" fill="#fff" /></>, true],
  ["System Preferences", <><path d="M1 4h34v29H1z" fill="#cfcfcf" stroke="#888" /><path d="M4 7h28v23H4z" fill="#2c2c2c" /><path d="M5 24l7 6M31 24l-7 6M4 20l6 4M32 20l-6 4" stroke="#c4c4c4" strokeWidth="3" strokeDasharray="2 1" /><circle cx="18" cy="18" r="9" fill="#3a3a3a" stroke="#c9c9c9" strokeWidth="3" strokeDasharray="2 1.500" /><circle cx="18" cy="18" r="7" fill="none" stroke="#b5b5b5" strokeWidth="1.800" /><path d="M18 18V11M18 18l6 4M18 18l-6 4" stroke="#b5b5b5" strokeWidth="1.500" /><circle cx="18" cy="18" r="2.200" fill="#b5b5b5" /></>, false],
  ["Viewer", <><path d="M0 9c8-5 26-3 36 6 1 8-4 12-12 11-5-4-9-3-14 2C3 26-2 17 0 9z" fill="#7fb4c8" stroke="#1f5168" strokeWidth="2" /><path d="M2 17c5 2 12-4 22-5M23 24c-1-5 2-8 10-10" fill="none" stroke="#e4f3f8" strokeWidth="2.500" /><path d="M5 22c5 0 9-6 16-6" stroke="#245e78" strokeWidth="2" fill="none" /></>, true],
  ["SketchUp", <><path d="M3 5l20-4 11 6-2 22-22 5-4-2z" fill="#e8222b" /><path d="M8 8l14-3 6 3-4 2-4-1-8 2zM9 16l12-3 5 3v3l-4-2-9 2zM10 24l8-2 4 2v3l-8 2z" fill="#fff" /></>, true],
  ["Rhino", <><path d="M7 3c3-4 8 0 8 5l1 6c5 2 7 5 10 5 4 0 6-5 9-5-1 7-6 13-11 13l-2 7-3 1-2-4-4-8c-4-2-9-7-12-12 3 1 6 2 8 2z" fill="#c8c8ca" stroke="#6d6d70" /><path d="M8 13l6-5M10 16l6 4 8 3M14 22l7 10" fill="none" stroke="#fff" strokeWidth="2" /><path d="M14 14l-4-2M22 28l2-5" stroke="#555" /></>, true],
]

const dockDocs: [string, ReactNode][] = [
  ["Document", <><path d="M4 7h28v20H4z" fill="#ddd" stroke="#777" /><path d="M6 2h18l6 6v25H6z" fill="#f8f8f8" stroke="#aaa" /><path d="M24 2v6h6z" fill="#333" /></>],
  ["InDesign window", <><path d="M0 7h36v20H0z" fill="#4c4c4c" stroke="#777" /><path d="M4 9h8v17H4z" fill="#303030" /><path d="M13 9h9v17h-9z" fill="#f0f0f0" /><path d="M15 12h5M15 15h5" stroke="#888" /><path d="M15 19h4v4h-4z" fill="#ab6a4a" /><AdobeIcon label="Id" color="#e0409a" bg="#3a1028" small /></>],
  ["Illustrator window", <><path d="M0 7h36v20H0z" fill="#f5f5f5" stroke="#666" /><path d="M10 25c2-6 5-10 7-12v12M19 14c5 2 8 8 9 11" fill="none" stroke="#e5c3c3" /><AdobeIcon label="Ai" color="#f28414" bg="#2e130c" small /></>],
  ["Bridge window", <><path d="M0 7h36v20H0z" fill="#565656" stroke="#888" /><path d="M12 9h17v12H12z" fill="#1a62b5" /><path d="M14 20c4-6 8-6 11-9l-3 8z" fill="#9ed3f5" /><path d="M3 24h16" stroke="#999" strokeDasharray="2 1" /><AdobeIcon label="Br" color="#f5ae1b" bg="#2b2114" small /></>],
  ["Trash", <><path d="M4 4l4 29c4 2 16 2 20 0l4-29z" fill="#6d6f71" stroke="#999" /><path d="M7 13l7 18 3-15 5 16 6-21M7 24l20-9M10 11l16 17" stroke="#a9abad" fill="none" strokeWidth="0.800" /><path d="M5 5l6-3 6 2 6-2 8 3-2 5-8 2-9-1-6-2z" fill="#f0f0f0" stroke="#aaa" strokeWidth="0.600" /><ellipse cx="18" cy="4" rx="14.500" ry="3.500" fill="none" stroke="#c9c9c9" strokeWidth="1.300" /></>],
]

function DockItem({ name, art, running }: { name: string; art: ReactNode; running?: boolean }) {
  return (
    <button aria-label={name} className="flex min-w-0 flex-1 flex-col items-center justify-between pt-1">
      <svg viewBox="0 0 36 36" className="h-9 w-9 overflow-visible">{art}</svg>
      <span className={running ? "h-[3px] w-2 rounded-full bg-[#e8f7ff] shadow-[0_0_3px_1px_#b9e2fa]" : "h-[3px]"} />
    </button>
  )
}

function Dock() {
  return (
    <div className="relative h-[51px] shrink-0 bg-gradient-to-r from-[#a9adb1] via-[#8f939a] to-[#a6a9ad]">
      <svg viewBox="0 0 960 51" preserveAspectRatio="none" className="absolute inset-0 h-full w-full">
        <defs>
          <linearGradient id="shelf" x1="0" y1="0" x2="0" y2="1">
            <stop offset="0" stopColor="#a9a9ab" />
            <stop offset="1" stopColor="#e0e0e1" />
          </linearGradient>
        </defs>
        <path d="M34 20h892l17 29H18z" fill="url(#shelf)" />
        <path d="M18 49.500h925" stroke="#8e8e90" strokeWidth="2" />
      </svg>
      <div className="relative flex h-full px-9">
        {dockApps.map(([name, art, running]) => (
          <DockItem key={name} name={name} art={art} running={running} />
        ))}
        <svg viewBox="0 0 18 51" className="w-[18px]"><path d="M7 23l7 24" stroke="#8a8a8a" /></svg>
        {dockDocs.map(([name, art]) => (
          <DockItem key={name} name={name} art={art} />
        ))}
      </div>
    </div>
  )
}

export default function App() {
  return (
    <div className="flex h-screen w-full flex-col overflow-hidden bg-[#747474] font-['Open_Sans',sans-serif]">
      <MenuBar />
      <main className="ml-0.5 flex min-h-0 flex-1 flex-col">
        <TitleBar />
        <div className="flex min-h-0 flex-1">
          <Sidebar />
          <div className="flex min-w-0 flex-1 flex-col">
            <ViewTabs />
            <Viewport />
          </div>
          <div className="flex w-[200px] shrink-0 flex-col">
            <LayerPanel id="layers-top" scrolled />
            <LayerPanel id="layers-bottom" />
          </div>
        </div>
        <StatusBar />
      </main>
      <EditorWindow />
      <Dock />
    </div>
  )
}
